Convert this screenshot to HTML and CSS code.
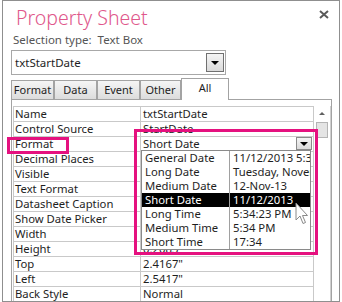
FILE: index.html
```html
<!DOCTYPE html>
<html lang="en">
<head>
    <meta charset="UTF-8">
    <meta name="viewport" content="width=device-width, initial-scale=1.0">
    <title>Property Sheet</title>
    <link rel="stylesheet" href="styles.css">
</head>
<body>
    <div class="window">
        <div class="header">
            <h1 class="title">Property Sheet</h1>
            <div class="sel-type">Selection type:&nbsp; Text Box</div>
            <div class="combo">
                <span class="combo-text">txtStartDate</span>
                <span class="combo-btn"><i class="arrow"></i></span>
            </div>
        </div>

        <svg class="close" width="10" height="9" viewBox="0 0 10 9">
            <path d="M1 1 L9 8 M9 1 L1 8" stroke="#5a5a5a" stroke-width="2"/>
        </svg>

        <div class="tabs">
            <div class="tab tab-format">Format</div>
            <div class="tab tab-data">Data</div>
            <div class="tab tab-event">Event</div>
            <div class="tab tab-other">Other</div>
            <div class="tab tab-all active">All</div>
        </div>

        <div class="panel">
            <div class="grid">
                <div class="rows">
                    <div class="row"><div class="label">Name</div><div class="value">txtStartDate</div></div>
                    <div class="row"><div class="label">Control Source</div><div class="value">StartDate</div></div>
                    <div class="row"><div class="label">Format</div><div class="value">Short Date<span class="cell-btn"><i class="arrow"></i></span></div></div>
                    <div class="row"><div class="label">Decimal Places</div><div class="value"></div></div>
                    <div class="row"><div class="label">Visible</div><div class="value"></div></div>
                    <div class="row"><div class="label">Text Format</div><div class="value"></div></div>
                    <div class="row"><div class="label">Datasheet Caption</div><div class="value"></div></div>
                    <div class="row"><div class="label">Show Date Picker</div><div class="value"></div></div>
                    <div class="row"><div class="label">Width</div><div class="value"></div></div>
                    <div class="row"><div class="label">Height</div><div class="value">0.2083"</div></div>
                    <div class="row"><div class="label">Top</div><div class="value">2.4167"</div></div>
                    <div class="row"><div class="label">Left</div><div class="value">2.5417"</div></div>
                    <div class="row"><div class="label">Back Style</div><div class="value">Normal</div></div>
                </div>
                <div class="scrollbar">
                    <i class="up"></i>
                    <div class="thumb"></div>
                </div>
            </div>
        </div>

        <!-- lista desplegable del formato -->
        <div class="droplist">
            <div class="item"><span>General Date</span><span>11/12/2013 5:34:23 PM</span></div>
            <div class="item"><span>Long Date</span><span>Tuesday, November 12, 2013</span></div>
            <div class="item"><span>Medium Date</span><span>12-Nov-13</span></div>
            <div class="item selected"><span>Short Date</span><span>11/12/2013</span></div>
            <div class="item"><span>Long Time</span><span>5:34:23 PM</span></div>
            <div class="item"><span>Medium Time</span><span>5:34 PM</span></div>
            <div class="item"><span>Short Time</span><span>17:34</span></div>
        </div>

        <div class="mark mark-label"></div>
        <div class="mark mark-drop"></div>

        <svg class="cursor" width="14" height="23" viewBox="0 0 14 23">
            <path d="M1 1 L1 18 L5 14 L8 21.5 L10.5 20.5 L7.5 13.5 L12.5 13.5 Z" fill="#fff" stroke="#8a8a8a" stroke-width="1" stroke-linejoin="round"/>
        </svg>
    </div>
</body>
</html>
```

FILE: styles.css
```css
* {
    margin: 0;
    padding: 0;
    box-sizing: border-box;
}

body {
    font-family: 'Noto Sans', 'Open Sans', sans-serif;
    font-size: 11.3px;
    color: #1e1e1e;
    background: #fff;
    width: 342px;
    height: 302px;
    overflow: hidden;
}

.window {
    position: relative;
    margin-left: 2px;
    width: 338px;
    height: 302px;
    border: 1px solid #8f8f8f;
    background: #fff;
    overflow: hidden;
}

.header {
    padding-left: 8px;
}

.title {
    margin-left: 5px;
    padding-top: 4px;
    font-family: 'Noto Sans', 'Open Sans', sans-serif;
    font-weight: 300;
    font-size: 19.5px;
    line-height: 26px;
    color: #e0578b;
}

.sel-type {
    margin-left: 2px;
    height: 19px;
    line-height: 17px;
    color: #555;
    font-size: 11.5px;
}

.combo {
    display: flex;
    align-items: center;
    justify-content: space-between;
    width: 215px;
    height: 25px;
    border: 1px solid #a8a8a8;
    padding: 0 1px 0 3px;
}

.combo-text {
    line-height: 20px;
    font-size: 11.5px;
}

.combo-btn {
    display: flex;
    align-items: center;
    justify-content: center;
    width: 18px;
    height: 19px;
    border: 1px solid #707070;
    background: linear-gradient(#f4f4f4, #dadada);
}

.arrow {
    width: 0;
    height: 0;
    border-left: 4px solid transparent;
    border-right: 4px solid transparent;
    border-top: 4px solid #000;
}

.close {
    position: absolute;
    left: 316px;
    top: 9px;
}

.tabs {
    display: flex;
    align-items: flex-end;
    height: 21px;
    margin-top: 3px;
    margin-left: 8px;
}

.tab {
    height: 19px;
    border: 1px solid #a3a3a3;
    border-bottom: none;
    background: linear-gradient(#f5f5f5, #dcdcdc);
    text-align: center;
    line-height: 17px;
    font-size: 11px;
    color: #1e1e1e;
}

.tab-format { width: 43px; }
.tab-data { width: 43px; }
.tab-event { width: 43px; }
.tab-other { width: 41px; }

.tab.active {
    width: 48px;
    height: 22px;
    margin-bottom: -1px;
    background: #fff;
    position: relative;
    z-index: 1;
    line-height: 18px;
}

.panel {
    width: 321px;
    height: 202px;
    margin-left: 8px;
    border: 1px solid #a3a3a3;
    border-bottom: none;
    padding: 6px 0 0 1px;
}

.grid {
    display: flex;
}

.rows {
    width: 301px;
    border-left: 1px solid #c9c9c9;
    border-top: 1px solid #c9c9c9;
}

.row {
    display: flex;
    height: 15px;
    border-bottom: 1px solid #c9c9c9;
    line-height: 14px;
}

.label {
    width: 126px;
    padding-left: 1px;
    white-space: nowrap;
}

.value {
    position: relative;
    flex: 1;
    border-left: 1px solid #c9c9c9;
    border-right: 1px solid #c9c9c9;
    padding-left: 2px;
    white-space: nowrap;
    overflow: hidden;
}

.cell-btn {
    position: absolute;
    right: 1px;
    top: 0;
    width: 16px;
    height: 13px;
    display: flex;
    align-items: center;
    justify-content: center;
    border: 1px solid #8a8a8a;
    background: linear-gradient(#f4f4f4, #dadada);
}

.scrollbar {
    width: 17px;
    height: 195px;
    display: flex;
    flex-direction: column;
    align-items: center;
    border-right: 1px solid #d0d0d0;
    background: #fff;
}

.scrollbar .up {
    margin-top: 6px;
    width: 0;
    height: 0;
    border-left: 3px solid transparent;
    border-right: 3px solid transparent;
    border-bottom: 3px solid #606060;
}

.scrollbar .thumb {
    margin-top: 7px;
    width: 12px;
    height: 16px;
    border: 1px solid #b4b4b4;
    background: #e4e4e4;
}

.droplist {
    position: absolute;
    left: 138px;
    top: 149px;
    width: 170px;
    height: 100px;
    border: 1px solid #8a8a8a;
    background: #fff;
    overflow: hidden;
}

.droplist .item {
    display: flex;
    height: 14px;
    line-height: 14px;
    white-space: nowrap;
}

.droplist .item span:first-child {
    width: 88px;
    padding-left: 3px;
    border-right: 1px solid #a0a0a0;
    flex-shrink: 0;
}

.droplist .item span:last-child {
    padding-left: 3px;
}

.droplist .item.selected {
    background: #000;
    color: #fff;
}

.mark {
    position: absolute;
    border: 3px solid #e5117f;
}

.mark-label {
    left: 4px;
    top: 136px;
    width: 62px;
    height: 17px;
}

.mark-drop {
    left: 131px;
    top: 128px;
    width: 184px;
    height: 126px;
}

.cursor {
    position: absolute;
    left: 292px;
    top: 201px;
}
```
